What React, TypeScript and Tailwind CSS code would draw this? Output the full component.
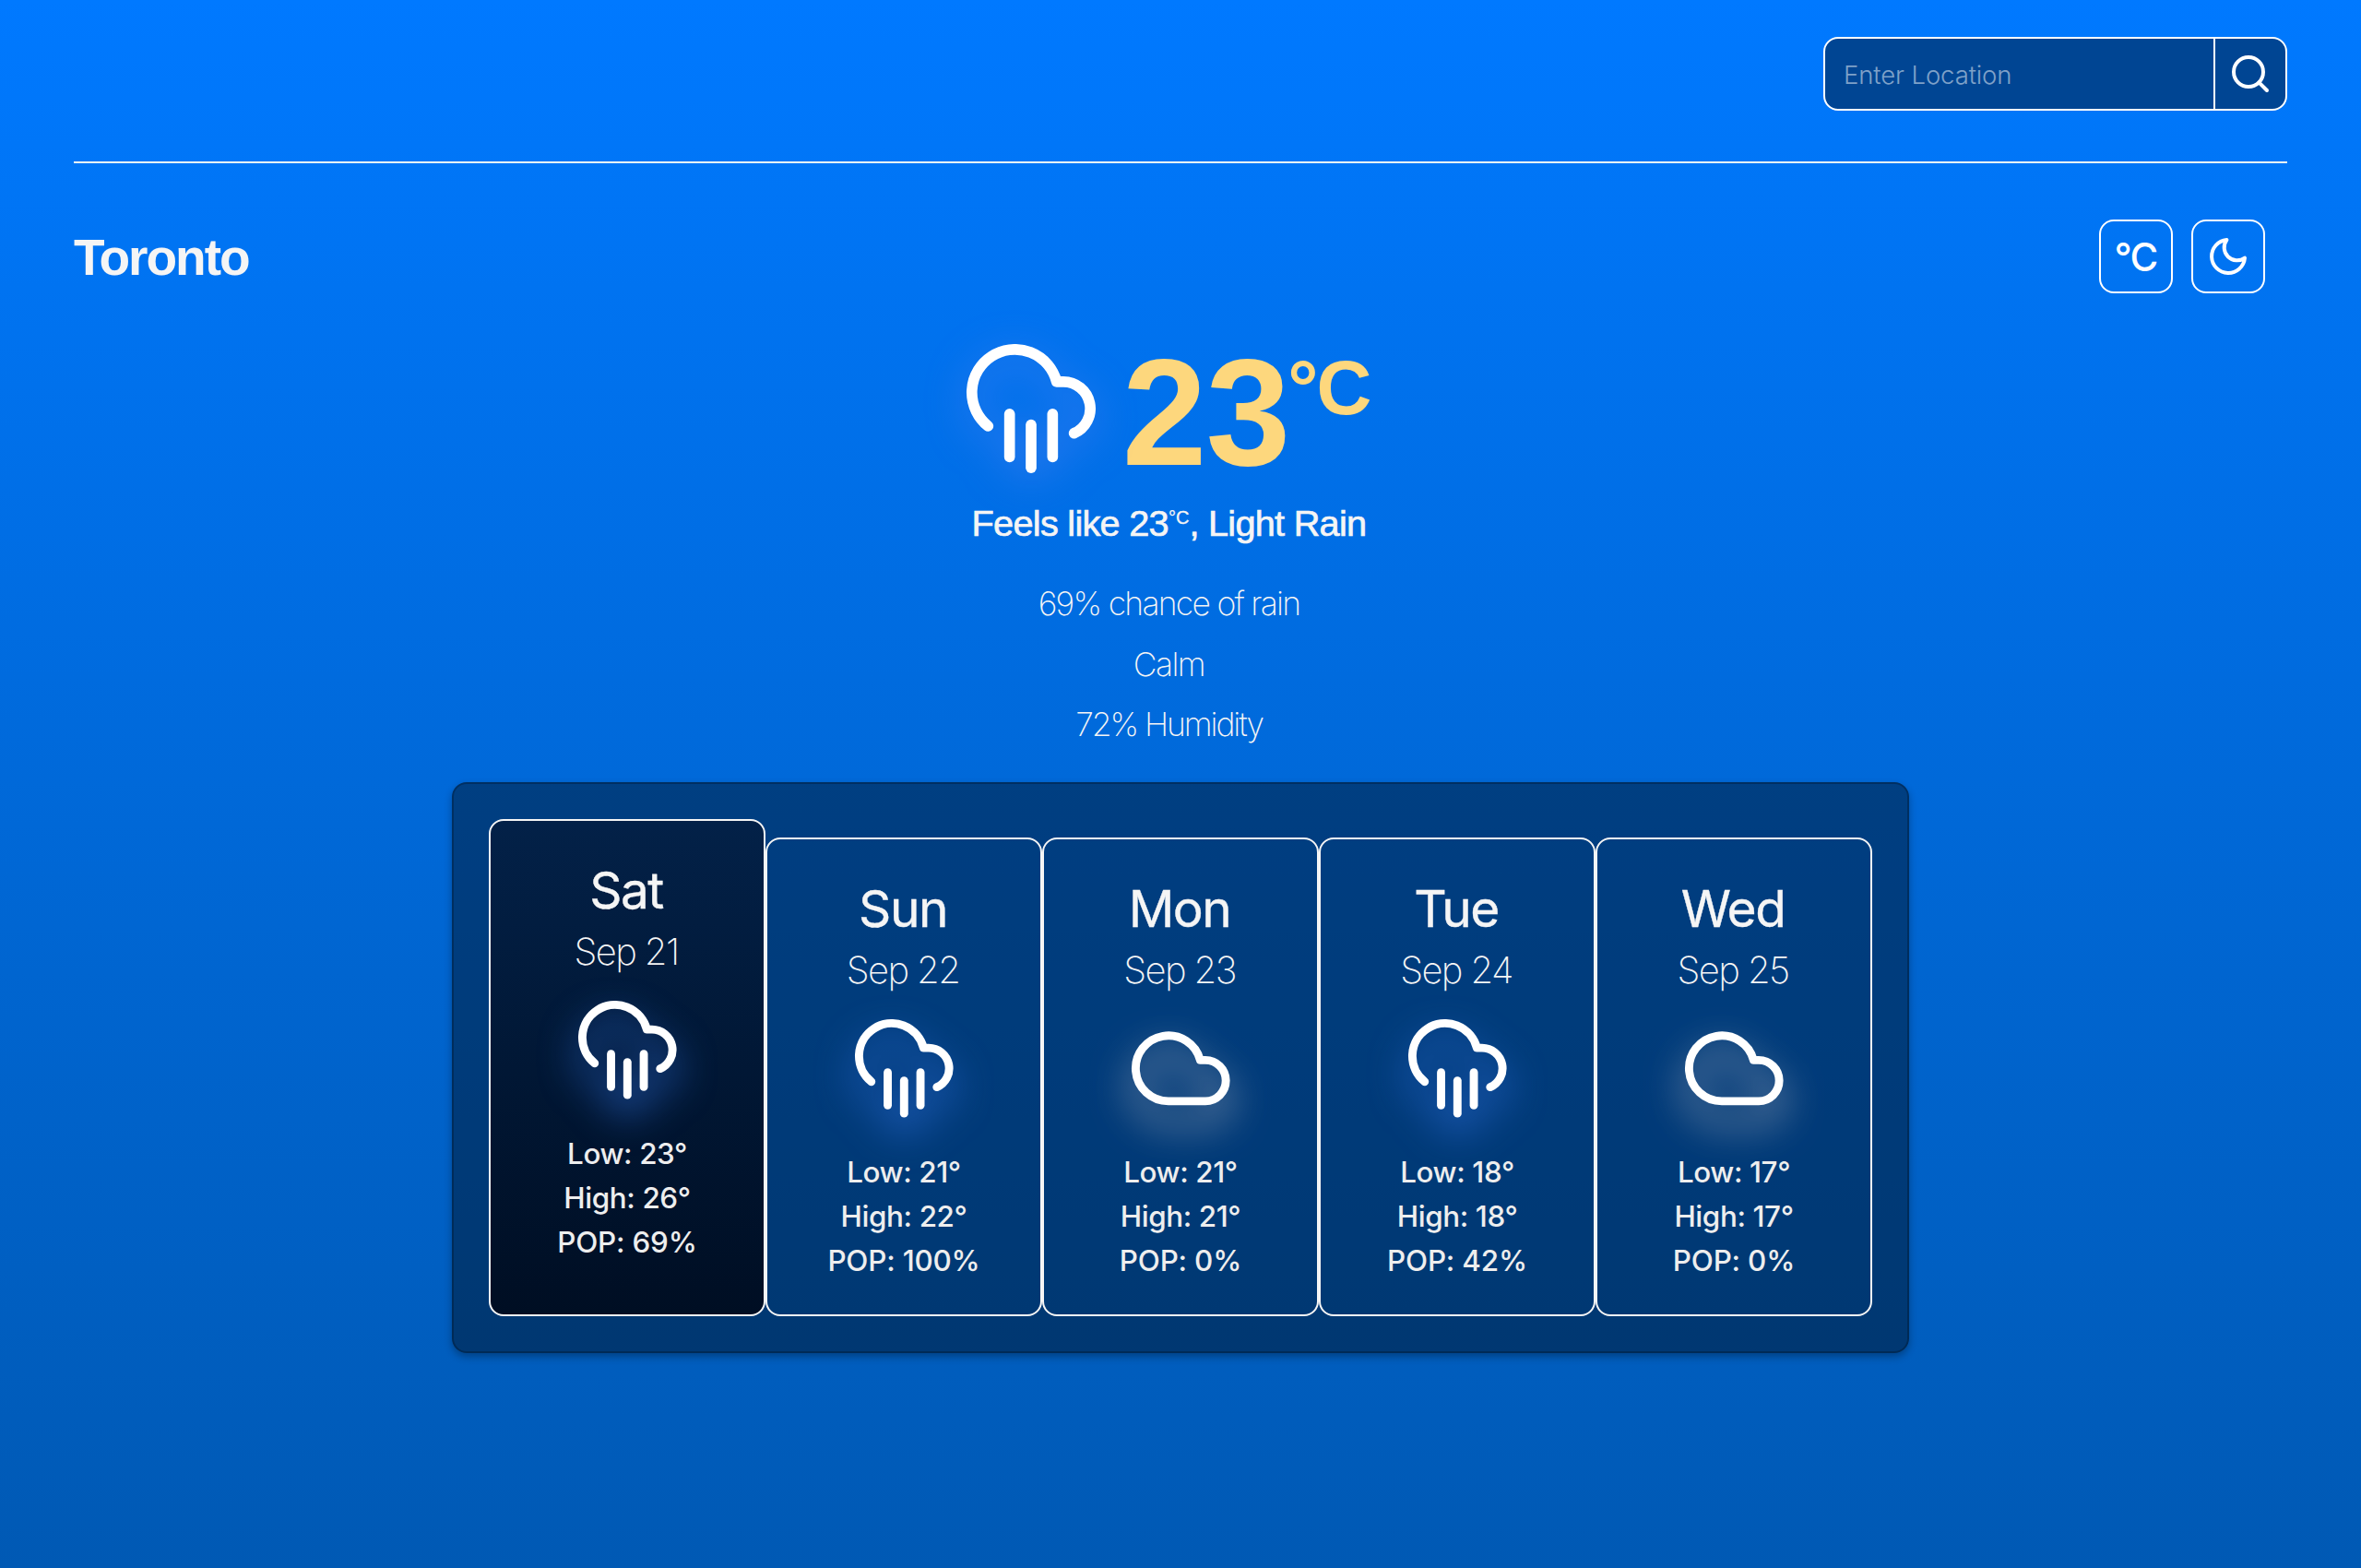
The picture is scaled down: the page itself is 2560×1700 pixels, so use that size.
import React from "react";

type Condition = "rain" | "cloud";

interface Day {
  name: string;
  date: string;
  condition: Condition;
  low: number;
  high: number;
  pop: number;
}

const days: Day[] = [
  { name: "Sat", date: "Sep 21", condition: "rain", low: 23, high: 26, pop: 69 },
  { name: "Sun", date: "Sep 22", condition: "rain", low: 21, high: 22, pop: 100 },
  { name: "Mon", date: "Sep 23", condition: "cloud", low: 21, high: 21, pop: 0 },
  { name: "Tue", date: "Sep 24", condition: "rain", low: 18, high: 18, pop: 42 },
  { name: "Wed", date: "Sep 25", condition: "cloud", low: 17, high: 17, pop: 0 },
];

const stroke = {
  viewBox: "0 0 24 24",
  fill: "none",
  stroke: "currentColor",
  strokeWidth: 2,
  strokeLinecap: "round" as const,
  strokeLinejoin: "round" as const,
};

function RainIcon({ className }: { className: string }) {
  return (
    <svg {...stroke} className={`overflow-visible text-white ${className}`}>
      <line x1="16" y1="13" x2="16" y2="21" />
      <line x1="8" y1="13" x2="8" y2="21" />
      <line x1="12" y1="15" x2="12" y2="23" />
      <path d="M20 16.58A5 5 0 0 0 18 7h-1.26A8 8 0 1 0 4 15.25" />
    </svg>
  );
}

function CloudIcon({ className }: { className: string }) {
  return (
    <svg {...stroke} className={`overflow-visible text-white ${className}`}>
      <path d="M18 10h-1.26A8 8 0 1 0 9 20h9a5 5 0 0 0 0-10z" />
    </svg>
  );
}

function SearchBar() {
  return (
    <form className="flex h-20 w-[503px] overflow-hidden rounded-2xl border-2 border-white bg-[#004593]">
      <input
        type="text"
        placeholder="Enter Location"
        className="min-w-0 flex-1 border-r-2 border-white bg-transparent pt-[4px] pl-5 text-[27.5px] font-light tracking-[-0.1px] text-white outline-none placeholder:text-white/50"
      />
      <button type="button" aria-label="Search" className="flex w-[76px] items-center justify-center text-white">
        <svg {...stroke} className="size-12">
          <circle cx="11" cy="11" r="8" />
          <line x1="21" y1="21" x2="16.65" y2="16.65" />
        </svg>
      </button>
    </form>
  );
}

function Toolbar() {
  return (
    <div className="flex gap-5 pr-6">
      <button
        type="button"
        className="flex size-20 items-center justify-center rounded-2xl border-2 border-white pt-[2px] pr-px text-[42px] leading-none font-medium tracking-[-1.6px] text-white"
      >
        °C
      </button>
      <button
        type="button"
        aria-label="Dark mode"
        className="flex size-20 items-center justify-center rounded-2xl border-2 border-white text-white"
      >
        <svg {...stroke} className="size-12">
          <path d="M21 12.79A9 9 0 1 1 11.21 3 7 7 0 0 0 21 12.79z" />
        </svg>
      </button>
    </div>
  );
}

function Current() {
  return (
    <section className="flex w-[2376px] flex-col items-center pt-[55px] font-['Liberation_Sans',Arial,sans-serif] text-[#f5f5f5]">
      <div className="flex h-[140px] items-start pr-[3px]">
        <RainIcon className="mr-[29px] size-[140px] drop-shadow-[0_10px_20px_#3a7cf0]" />
        <span className="pt-[4px] text-[165px] leading-[140px] font-bold tracking-[-1px] text-[#fdd77d]">23</span>
        <span className="-ml-[2px] pt-[7px] text-[83px] leading-[82px] font-bold tracking-[-2px] text-[#fdd77d]">°C</span>
      </div>
      <p className="mt-[30px] h-12 pr-px text-[39.7px] leading-[48px] tracking-[-0.73px] [-webkit-text-stroke:0.7px_#f5f5f5]">
        Feels like 23
        <span className="align-[13px] text-[20px] leading-none tracking-normal [-webkit-text-stroke:0.3px_#f5f5f5]">°C</span>, Light Rain
      </p>
      <div className="mt-[31px] pr-px text-center font-[Inter,sans-serif] text-[35.5px] leading-[65.6px] font-extralight">
        <p className="tracking-[-1.75px]">69% chance of rain</p>
        <p className="tracking-[-1.6px]">Calm</p>
        <p className="tracking-[-2.1px]">72% Humidity</p>
      </div>
    </section>
  );
}

function DayCard({ day, active }: { day: Day; active: boolean }) {
  return (
    <div
      className={`flex w-[300px] flex-col items-center rounded-2xl border-2 border-[#f5f5f5] pt-[43px] text-[#f5f5f5] ${
        active ? "bg-linear-to-b from-[#032148] to-[#000e23]" : "mt-5"
      }`}
    >
      <h2 className="pr-[2px] text-[55px] leading-[64px] font-normal tracking-[-1.5px] [-webkit-text-stroke:0.4px_#f5f5f5]">{day.name}</h2>
      <p className="mt-[11px] pr-[2px] text-[40px] leading-[48px] font-extralight tracking-[-1.6px]">{day.date}</p>
      {day.condition === "rain" ? (
        <RainIcon className="mt-[29px] size-[106.6px] drop-shadow-[0_20px_20px_#2f70dd]" />
      ) : (
        <CloudIcon className="mt-[29px] size-[106.6px] drop-shadow-[0_20px_20px_#b8bac4]" />
      )}
      <div className="mt-[36px] text-center text-[31.4px] leading-[48px] font-[450] tracking-[-0.4px] text-[#eeeeee]">
        <p>Low: {day.low}°</p>
        <p>High: {day.high}°</p>
        <p className="tracking-[-0.2px]">POP: {day.pop}%</p>
      </div>
    </div>
  );
}

export default function App() {
  return (
    <div className="flex h-[1700px] w-[2560px] flex-col overflow-hidden bg-linear-to-b from-[#0079ff] to-[#0059b4] px-20 pt-10 font-[Inter,sans-serif]">
      <header className="flex justify-end">
        <SearchBar />
      </header>
      <hr className="mt-[55px] h-0.5 border-0 bg-[#f5f5f5]" />
      <div className="mt-[61px] flex items-center justify-between">
        <h1 className="pt-[2px] font-['Liberation_Sans',Arial,sans-serif] text-[55px] leading-[64px] font-bold tracking-[-2px] text-[#f5f5f5]">
          Toronto
        </h1>
        <Toolbar />
      </div>
      <Current />
      <section className="mt-[29px] flex h-[619px] w-[1580px] self-center rounded-2xl border-2 border-black/25 bg-black/40 p-[38px] shadow-[0_4px_8px_rgba(0,0,0,0.3)]">
        {days.map((day, i) => (
          <DayCard key={day.name} day={day} active={i === 0} />
        ))}
      </section>
    </div>
  );
}
